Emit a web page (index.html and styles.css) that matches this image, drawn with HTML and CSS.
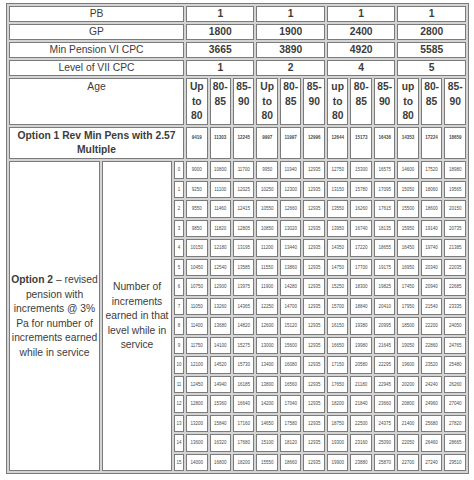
FILE: index.html
```html
<!DOCTYPE html>
<html>
<head>
<meta charset="utf-8">
<link rel="stylesheet" href="styles.css">
</head>
<body>
<table class="pt">
<colgroup>
<col class="c1"><col class="c2"><col class="c3">
<col><col><col><col><col><col><col><col><col><col><col><col>
</colgroup>
<tr class="h"><td colspan="3">PB</td><td colspan="3" class="val">1</td><td colspan="3" class="val">1</td><td colspan="3" class="val">1</td><td colspan="3" class="val">1</td></tr>
<tr class="h"><td colspan="3">GP</td><td colspan="3" class="val">1800</td><td colspan="3" class="val">1900</td><td colspan="3" class="val">2400</td><td colspan="3" class="val">2800</td></tr>
<tr class="h"><td colspan="3">Min Pension VI CPC</td><td colspan="3" class="val">3665</td><td colspan="3" class="val">3890</td><td colspan="3" class="val">4920</td><td colspan="3" class="val">5585</td></tr>
<tr class="h"><td colspan="3">Level of VII CPC</td><td colspan="3" class="val">1</td><td colspan="3" class="val">2</td><td colspan="3" class="val">4</td><td colspan="3" class="val">5</td></tr>
<tr class="age"><td colspan="3">Age</td>
<td class="ag">Up<br>to<br>80</td><td class="ag">80-<br>85</td><td class="ag">85-<br>90</td>
<td class="ag">Up<br>to<br>80</td><td class="ag">80-<br>85</td><td class="ag">85-<br>90</td>
<td class="ag">up<br>to<br>80</td><td class="ag">80-<br>85</td><td class="ag">85-<br>90</td>
<td class="ag">up<br>to<br>80</td><td class="ag">80-<br>85</td><td class="ag">85-<br>90</td></tr>
<tr class="opt1"><td colspan="3" class="o1">Option 1 Rev Min Pens with 2.57<br>Multiple</td>
<td class="n b">9419</td><td class="n b">11303</td><td class="n b">12245</td><td class="n b">9997</td><td class="n b">11997</td><td class="n b">12996</td><td class="n b">12644</td><td class="n b">15173</td><td class="n b">16436</td><td class="n b">14353</td><td class="n b">17224</td><td class="n b">18659</td></tr>
<tr class="d"><td rowspan="16" class="o2"><b>Option 2</b> – revised<br>pension with<br>increments @ 3%<br>Pa for number of<br>increments earned<br>while in service</td><td rowspan="16" class="num">Number of<br>increments<br>earned in that<br>level while in<br>service</td>
<td class="n">0</td><td class="n">9000</td><td class="n">10800</td><td class="n">11700</td><td class="n">9950</td><td class="n">11940</td><td class="n">12935</td><td class="n">12750</td><td class="n">15300</td><td class="n">16575</td><td class="n">14600</td><td class="n">17520</td><td class="n">18980</td></tr>
<tr class="d"><td class="n">1</td><td class="n">9250</td><td class="n">11100</td><td class="n">12025</td><td class="n">10250</td><td class="n">12300</td><td class="n">12935</td><td class="n">13150</td><td class="n">15780</td><td class="n">17095</td><td class="n">15050</td><td class="n">18060</td><td class="n">19565</td></tr>
<tr class="d"><td class="n">2</td><td class="n">9550</td><td class="n">11460</td><td class="n">12415</td><td class="n">10550</td><td class="n">12660</td><td class="n">12935</td><td class="n">13550</td><td class="n">16260</td><td class="n">17615</td><td class="n">15500</td><td class="n">18600</td><td class="n">20150</td></tr>
<tr class="d"><td class="n">3</td><td class="n">9850</td><td class="n">11820</td><td class="n">12805</td><td class="n">10850</td><td class="n">13020</td><td class="n">12935</td><td class="n">13950</td><td class="n">16740</td><td class="n">18135</td><td class="n">15950</td><td class="n">19140</td><td class="n">20735</td></tr>
<tr class="d"><td class="n">4</td><td class="n">10150</td><td class="n">12180</td><td class="n">13195</td><td class="n">11200</td><td class="n">13440</td><td class="n">12935</td><td class="n">14350</td><td class="n">17220</td><td class="n">18655</td><td class="n">16450</td><td class="n">19740</td><td class="n">21385</td></tr>
<tr class="d"><td class="n">5</td><td class="n">10450</td><td class="n">12540</td><td class="n">13585</td><td class="n">11550</td><td class="n">13860</td><td class="n">12935</td><td class="n">14750</td><td class="n">17700</td><td class="n">19175</td><td class="n">16950</td><td class="n">20340</td><td class="n">22035</td></tr>
<tr class="d"><td class="n">6</td><td class="n">10750</td><td class="n">12900</td><td class="n">13975</td><td class="n">11900</td><td class="n">14280</td><td class="n">12935</td><td class="n">15250</td><td class="n">18300</td><td class="n">19825</td><td class="n">17450</td><td class="n">20940</td><td class="n">22685</td></tr>
<tr class="d"><td class="n">7</td><td class="n">11050</td><td class="n">13260</td><td class="n">14365</td><td class="n">12250</td><td class="n">14700</td><td class="n">12935</td><td class="n">15700</td><td class="n">18840</td><td class="n">20410</td><td class="n">17950</td><td class="n">21540</td><td class="n">23335</td></tr>
<tr class="d"><td class="n">8</td><td class="n">11400</td><td class="n">13680</td><td class="n">14820</td><td class="n">12600</td><td class="n">15120</td><td class="n">12935</td><td class="n">16150</td><td class="n">19380</td><td class="n">20995</td><td class="n">18500</td><td class="n">22200</td><td class="n">24050</td></tr>
<tr class="d"><td class="n">9</td><td class="n">11750</td><td class="n">14100</td><td class="n">15275</td><td class="n">13000</td><td class="n">15600</td><td class="n">12935</td><td class="n">16650</td><td class="n">19980</td><td class="n">21645</td><td class="n">19050</td><td class="n">22860</td><td class="n">24765</td></tr>
<tr class="d"><td class="n">10</td><td class="n">12100</td><td class="n">14520</td><td class="n">15730</td><td class="n">13400</td><td class="n">16080</td><td class="n">12935</td><td class="n">17150</td><td class="n">20580</td><td class="n">22295</td><td class="n">19600</td><td class="n">23520</td><td class="n">25480</td></tr>
<tr class="d"><td class="n">11</td><td class="n">12450</td><td class="n">14940</td><td class="n">16185</td><td class="n">13800</td><td class="n">16560</td><td class="n">12935</td><td class="n">17650</td><td class="n">21180</td><td class="n">22945</td><td class="n">20200</td><td class="n">24240</td><td class="n">26260</td></tr>
<tr class="d"><td class="n">12</td><td class="n">12800</td><td class="n">15360</td><td class="n">16640</td><td class="n">14200</td><td class="n">17040</td><td class="n">12935</td><td class="n">18200</td><td class="n">21840</td><td class="n">23660</td><td class="n">20800</td><td class="n">24960</td><td class="n">27040</td></tr>
<tr class="d"><td class="n">13</td><td class="n">13200</td><td class="n">15840</td><td class="n">17160</td><td class="n">14650</td><td class="n">17580</td><td class="n">12935</td><td class="n">18750</td><td class="n">22500</td><td class="n">24375</td><td class="n">21400</td><td class="n">25680</td><td class="n">27820</td></tr>
<tr class="d"><td class="n">14</td><td class="n">13600</td><td class="n">16320</td><td class="n">17680</td><td class="n">15100</td><td class="n">18120</td><td class="n">12935</td><td class="n">19300</td><td class="n">23160</td><td class="n">25090</td><td class="n">22050</td><td class="n">26460</td><td class="n">28665</td></tr>
<tr class="d"><td class="n">15</td><td class="n">14000</td><td class="n">16800</td><td class="n">18200</td><td class="n">15550</td><td class="n">18660</td><td class="n">12935</td><td class="n">19900</td><td class="n">23880</td><td class="n">25870</td><td class="n">22700</td><td class="n">27240</td><td class="n">29510</td></tr>
</table>
</body>
</html>
```
FILE: styles.css
```css
body {
  margin: 0;
  background: #fff;
  font-family: "Liberation Sans", Arial, sans-serif;
}
.pt {
  table-layout: fixed;
  width: 463px;
  margin: 3px 0 0 6px;
  border: 1px solid #7b7b7b;
  border-collapse: separate;
  border-spacing: 2px;
  background: #d4d4d4;
  color: #3c3c3c;
  font-size: 10.3px;
}
.pt td {
  border: 1px solid #7b7b7b;
  background: #fff;
  padding: 0 1px;
  text-align: center;
  vertical-align: middle;
  line-height: 14.5px;
  overflow: hidden;
  white-space: nowrap;
}
.c1 { width: 91px; }
.c2 { width: 70px; }
.c3 { width: 10px; }
tr.h { height: 16px; }
.pt tr.h td { line-height: 14px; }
.val { font-weight: bold; }
tr.age { height: 46px; }
.pt tr.age td { vertical-align: top; padding-top: 1px; }
.ag { font-weight: bold; }
tr.opt1 { height: 32px; }
.pt tr.opt1 td { vertical-align: baseline; padding-top: 1px; }
.o1 { font-weight: bold; }
tr.d { height: 17px; }
tr.d:nth-child(odd) { height: 18px; }
.pt td.n {
  font-size: 4.5px;
  line-height: 5px;
  color: #4a4a4a;
  padding: 0;
}
.pt td.b { font-weight: bold; }
.pt td.o2, .pt td.num {
  padding: 2px 0 0;
}
```
